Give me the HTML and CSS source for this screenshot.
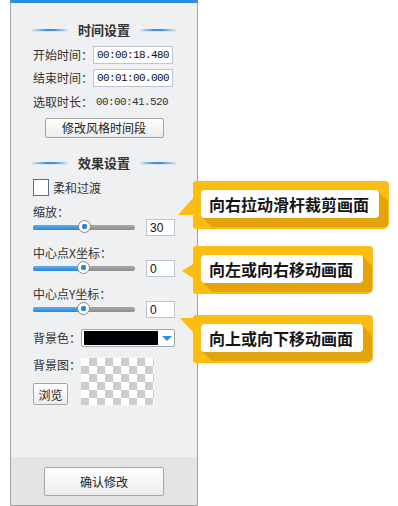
FILE: index.html
```html
<!DOCTYPE html>
<html>
<head>
    <meta charset="utf-8">
    <title>效果设置</title>
    <link rel="stylesheet" href="styles.css">
</head>
<body>
    <div class="page">
        <div class="panel">
            <div class="panel-body">
                <div class="section-title"><span class="line"></span><span class="title-text">时间设置</span><span class="line"></span></div>
                <div class="field first">
                    <span class="label">开始时间：</span>
                    <input class="time-input" type="text" value="00:00:18.480">
                </div>
                <div class="field second">
                    <span class="label">结束时间：</span>
                    <input class="time-input" type="text" value="00:01:00.000">
                </div>
                <div class="field third">
                    <span class="label">选取时长：</span>
                    <span class="time-value">00:00:41.520</span>
                </div>
                <div class="btn-row">
                    <button class="btn btn-style">修改风格时间段</button>
                </div>

                <div class="section-title second-title"><span class="line"></span><span class="title-text">效果设置</span><span class="line"></span></div>
                <div class="check-row">
                    <span class="checkbox"></span>
                    <span class="check-label">柔和过渡</span>
                </div>

                <div class="slider-label">缩放：</div>
                <div class="slider-row">
                    <div class="slider"><div class="slider-fill" style="width: 51%"></div><div class="thumb" style="left: 51%"></div></div>
                    <input class="num-input" type="text" value="30">
                </div>
                <div class="slider-label spaced">中心点X坐标：</div>
                <div class="slider-row">
                    <div class="slider"><div class="slider-fill" style="width: 50%"></div><div class="thumb" style="left: 50%"></div></div>
                    <input class="num-input" type="text" value="0">
                </div>
                <div class="slider-label spaced">中心点Y坐标：</div>
                <div class="slider-row">
                    <div class="slider"><div class="slider-fill" style="width: 50%"></div><div class="thumb" style="left: 50%"></div></div>
                    <input class="num-input" type="text" value="0">
                </div>

                <div class="color-row">
                    <span class="label short">背景色：</span>
                    <div class="color-select">
                        <span class="color-swatch"></span>
                        <span class="arrow"></span>
                    </div>
                </div>
                <div class="image-row">
                    <div class="image-left">
                        <span class="label short">背景图：</span>
                        <button class="btn btn-browse">浏览</button>
                    </div>
                    <div class="checker"></div>
                </div>
            </div>
            <div class="panel-foot">
                <button class="btn btn-confirm">确认修改</button>
            </div>
        </div>

        <!-- tips on the right -->
        <div class="callout tip-zoom"><span class="callout-text">向右拉动滑杆裁剪画面</span></div>
        <div class="callout tip-x"><span class="callout-text">向左或向右移动画面</span></div>
        <div class="callout tip-y"><span class="callout-text">向上或向下移动画面</span></div>
    </div>
</body>
</html>
```

FILE: styles.css
```css
body {
    margin: 0;
    background: #fff;
    font-family: "Noto Sans CJK SC", "Liberation Sans", sans-serif;
    font-size: 12px;
    color: #333;
}
.page {
    position: relative;
    width: 398px;
    height: 506px;
    overflow: hidden;
}
.panel {
    margin-left: 10px;
    width: 186px;
    height: 502px;
    border-top: 3px solid #2b8ce2;
    border-left: 1px solid #a3a3a3;
    border-right: 1px solid #a3a3a3;
    border-bottom: 1px solid #a3a3a3;
    background: #eef0f2;
    display: flex;
    flex-direction: column;
}
.panel-body {
    flex: 1;
    padding: 0 22px;
}
.section-title {
    margin: 18px -4px 0 -4px;
    height: 18px;
    display: flex;
    align-items: center;
    justify-content: center;
    gap: 10px;
}
.second-title {
    margin-top: 16px;
}
.title-text {
    font-size: 13px;
    font-weight: bold;
    color: #333;
    line-height: 18px;
}
.line {
    width: 36px;
    height: 2px;
    background: linear-gradient(to right, rgba(60, 140, 220, 0.1), #3d8fdc 40%, #3d8fdc 60%, rgba(60, 140, 220, 0.1));
    border-bottom: 1px solid #d6e6f6;
}
.field {
    height: 18px;
    display: flex;
    align-items: center;
}
.field.first { margin-top: 7px; }
.field.second { margin-top: 5px; }
.field.third { margin-top: 6px; }
.label {
    width: 60px;
    line-height: 18px;
    white-space: nowrap;
}
.label.short {
    width: 48px;
}
.time-input {
    box-sizing: border-box;
    width: 80px;
    height: 18px;
    margin: 0;
    padding: 0 3px;
    border: 1px solid #bcc6d0;
    background: #fff;
    font-family: "Liberation Mono", monospace;
    font-size: 11px;
    letter-spacing: -0.6px;
    color: #111;
    outline: none;
}
.time-value {
    padding-left: 3px;
    font-family: "Liberation Mono", monospace;
    font-size: 11px;
    letter-spacing: -0.6px;
    color: #333;
}
.btn {
    font-family: "Noto Sans CJK SC", sans-serif;
    font-size: 12px;
    color: #222;
    background: linear-gradient(#ffffff, #ececec);
    border: 1px solid #a5a5a5;
    border-radius: 2px;
    padding: 0;
    cursor: pointer;
}
.btn-row {
    margin-top: 7px;
    display: flex;
    justify-content: center;
}
.btn-style {
    width: 119px;
    height: 20px;
    line-height: 18px;
}
.check-row {
    margin-top: 7px;
    height: 17px;
    display: flex;
    align-items: center;
}
.checkbox {
    box-sizing: border-box;
    width: 16px;
    height: 17px;
    border: 1px solid #4f6f8f;
    background: #fff;
}
.check-label {
    margin-left: 4px;
    font-size: 12px;
}
.slider-label {
    margin-top: 9px;
    height: 14px;
    line-height: 14px;
}
.slider-label.spaced {
    margin-top: 10px;
}
.slider-row {
    height: 17px;
    display: flex;
    align-items: center;
    justify-content: space-between;
}
.slider {
    position: relative;
    width: 102px;
    height: 5px;
    border-radius: 3px;
    background: linear-gradient(#a8a8a8, #8e8e8e);
}
.slider-fill {
    height: 5px;
    border-radius: 3px 0 0 3px;
    background: linear-gradient(#5cb0f2, #2b86d8);
}
.thumb {
    position: absolute;
    top: -5px;
    width: 11px;
    height: 11px;
    margin-left: -7px;
    border: 1px solid #8a8a8a;
    border-radius: 50%;
    background: radial-gradient(circle, #2a86dc 0, #2a86dc 2.5px, #fff 3px);
}
.num-input {
    box-sizing: border-box;
    width: 29px;
    height: 17px;
    margin: 0;
    padding: 0 3px;
    border: 1px solid #bcc6d0;
    background: #fff;
    font-family: "Liberation Sans", sans-serif;
    font-size: 12px;
    color: #111;
    outline: none;
}
.color-row {
    margin-top: 11px;
    height: 18px;
    display: flex;
    align-items: center;
}
.color-select {
    box-sizing: border-box;
    width: 94px;
    height: 18px;
    padding: 2px;
    border: 1px solid #9aa6b2;
    border-radius: 2px;
    background: #fff;
    display: flex;
    align-items: center;
}
.color-swatch {
    width: 75px;
    height: 14px;
    background: #000;
}
.arrow {
    margin-left: 4px;
    width: 0;
    height: 0;
    border-left: 5px solid transparent;
    border-right: 5px solid transparent;
    border-top: 5px solid #2f8ae0;
}
.image-row {
    margin-top: 11px;
    height: 47px;
    display: flex;
}
.image-left {
    width: 48px;
    display: flex;
    flex-direction: column;
    justify-content: space-between;
}
.image-left .label {
    line-height: 14px;
}
.btn-browse {
    width: 35px;
    height: 22px;
}
.checker {
    width: 73px;
    height: 47px;
    background-color: #fff;
    background-image: conic-gradient(#cdcdcd 25%, #fff 0 50%, #cdcdcd 0 75%, #fff 0);
    background-size: 16px 16px;
}
.panel-foot {
    height: 48px;
    background: #e3e4e6;
    display: flex;
    justify-content: center;
    align-items: center;
}
.btn-confirm {
    width: 120px;
    height: 29px;
    font-size: 12px;
}

/* yellow tips */
.callout {
    position: absolute;
    left: 193px;
    padding: 9px 10px 11px 8px;
    background: #fcbd12;
    border-radius: 3px 4px 6px 3px;
    font-size: 16px;
    font-weight: bold;
    color: #151515;
    white-space: nowrap;
}
.callout-text {
    display: block;
    height: 28px;
    line-height: 28px;
    padding: 0 10px 0 8px;
    background: #fff;
    border-radius: 4px;
    box-shadow: 1px 1px 0 #e3a30c, 2px 2px 0 #e3a30c, 3px 3px 0 #e3a30c, 4px 4px 0 #e3a30c,
        5px 5px 0 #e3a30c, 6px 6px 0 #e3a30c, 7px 7px 0 #e3a30c, 8px 8px 0 #e3a30c, 9px 9px 0 #e3a30c;
}
.callout::after {
    content: "";
    position: absolute;
    width: 15px;
    height: 17px;
    background: #fcbd12;
}
.tip-zoom { top: 181px; }
.tip-x { top: 246px; }
.tip-y { top: 315px; }
.tip-zoom::after {
    left: -15px;
    top: 17px;
    clip-path: polygon(100% 0, 0 100%, 100% 100%);
}
.tip-x::after {
    left: -11px;
    top: 18px;
    width: 11px;
    height: 14px;
    clip-path: polygon(100% 0, 0 50%, 100% 100%);
}
.tip-y::after {
    left: -13px;
    top: 3px;
    width: 13px;
    height: 14px;
    clip-path: polygon(0 0, 100% 0, 100% 100%);
}
```
